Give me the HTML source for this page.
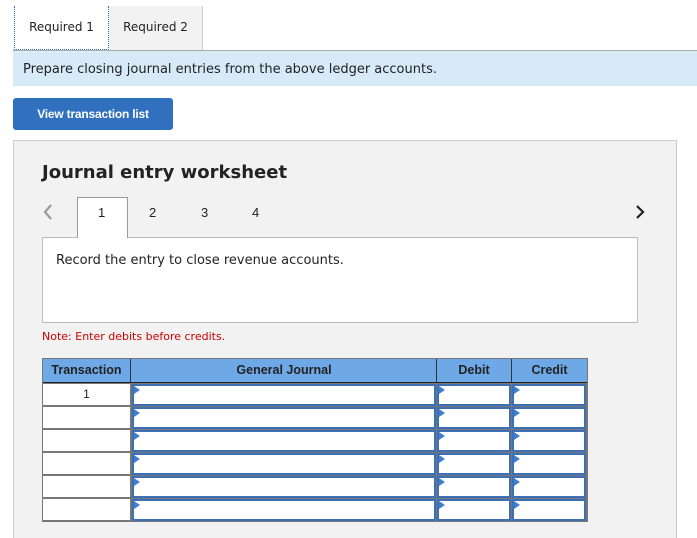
<!DOCTYPE html>
<html><head><style>
*{box-sizing:border-box;margin:0;padding:0}
html,body{width:697px;height:538px;overflow:hidden}
body{background:#fff;font-family:"DejaVu Sans",Verdana,sans-serif;position:relative;color:#222}
.a{position:absolute}
.arial{font-family:"Liberation Sans",Arial,sans-serif}
.tab{top:6px;height:44px;font-size:12px;line-height:42px;text-align:center}
.cell{position:absolute;background:#fff}
.inp{border:2px solid #3c6fb6;outline:1px solid #777}
.tri{position:absolute;left:0;top:0;width:0;height:0;border-top:4px solid transparent;border-bottom:4px solid transparent;border-left:6px solid #3c7fd0}
</style></head><body>
<div class="a tab" style="left:14px;width:95px;border-left:1px dotted #2f6fc4;border-right:1px dotted #2f6fc4;border-bottom:1px dotted #2f6fc4;background:#fff">Required 1</div>
<div class="a tab" style="left:109px;width:94px;background:#f2f2f2;border-right:1px solid #ccc">Required 2</div>
<div class="a" style="left:13px;top:50px;width:684px;height:36px;background:#d7eaf8;border-top:1px solid #aaa;font-size:13px;line-height:37px;padding-left:10px">Prepare closing journal entries from the above ledger accounts.</div>
<div class="a arial" style="left:13px;top:98px;width:160px;height:32px;background:#3070bf;border-radius:3px;color:#fff;font-weight:bold;font-size:12px;line-height:32px;text-align:center;letter-spacing:-0.2px">View transaction list</div>
<div class="a" style="left:13px;top:140px;width:664px;height:410px;background:#f2f2f2;border:1px solid #ccc"></div>
<div class="a" style="left:42px;top:162px;font-size:18px;font-weight:bold">Journal entry worksheet</div>
<svg class="a" style="left:40px;top:202px" width="16" height="20"><path d="M11 3 L5 10 L11 17" fill="none" stroke="#999" stroke-width="2.2"/></svg>
<svg class="a" style="left:632px;top:202px" width="16" height="20"><path d="M5 4 L11 10 L5 16" fill="none" stroke="#222" stroke-width="2.2"/></svg>
<div class="a" style="left:42px;top:237px;width:596px;height:86px;background:#fff;border:1px solid #bbb"></div>
<div class="a" style="left:77px;top:197px;width:51px;height:41px;background:#fff;border:1px solid #999;border-bottom:none"></div>
<div class="a arial" style="left:98px;top:205px;font-size:13px">1</div>
<div class="a arial" style="left:149px;top:205px;font-size:13px">2</div>
<div class="a arial" style="left:201px;top:205px;font-size:13px">3</div>
<div class="a arial" style="left:252px;top:205px;font-size:13px">4</div>
<div class="a" style="left:56px;top:253px;font-size:13px">Record the entry to close revenue accounts.</div>
<div class="a" style="left:42px;top:330px;font-size:11px;color:#c00">Note: Enter debits before credits.</div>
<div class="a" style="left:42px;top:358px;width:546px;height:164px;background:#777"></div>
<div class="a arial" style="left:43px;top:359px;width:544px;height:24px;background:#6fa8e6;border-bottom:1px solid #222;font-weight:bold;font-size:12.5px;line-height:23px">
<span class="a" style="left:0;width:88px;text-align:center;border-right:1px solid #333;height:23px">Transaction</span>
<span class="a" style="left:89px;width:305px;text-align:center;border-right:1px solid #333;height:23px">General Journal</span>
<span class="a" style="left:394px;width:75px;text-align:center;border-right:1px solid #333;height:23px">Debit</span>
<span class="a" style="left:469px;width:75px;text-align:center;height:23px">Credit</span>
</div>
<div id="rows"></div>
<script>
var h='',ys=[384,407,430,453,476,499];
ys.forEach(function(y,i){
h+='<div class="cell arial" style="left:43px;top:'+y+'px;width:87px;height:21px;text-align:center;font-size:12px;line-height:20px">'+(i==0?'1':'')+'</div>';
[[132,304],[437,74],[512,74]].forEach(function(c){
h+='<div class="cell inp" style="left:'+c[0]+'px;top:'+y+'px;width:'+c[1]+'px;height:22px"><div class="tri"></div></div>';});
});
document.getElementById('rows').innerHTML=h;
</script>
</body></html>
